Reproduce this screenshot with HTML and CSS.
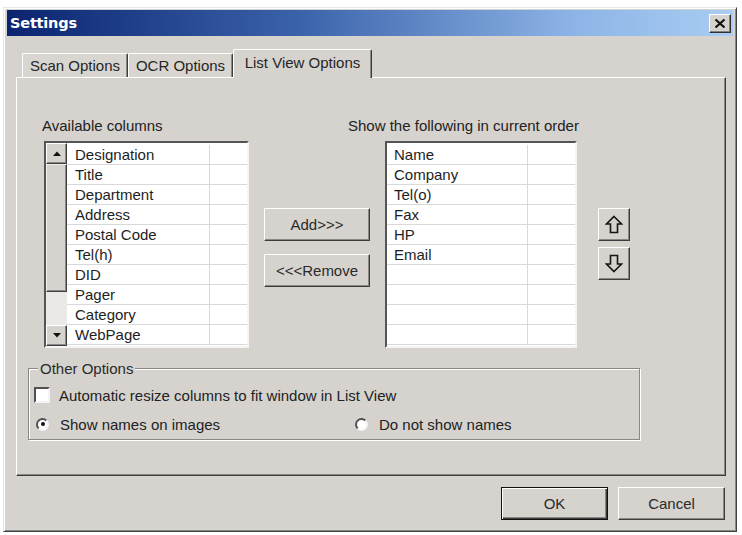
FILE: index.html
```html
<!DOCTYPE html>
<html>
<head>
<meta charset="utf-8">
<title>Settings</title>
<link rel="stylesheet" href="styles.css">
</head>
<body>
<div class="window">
  <div class="titlebar">
    <span class="title">Settings</span>
    <span class="close">
      <svg width="12" height="11" viewBox="0 0 12 11"><path d="M1.5 1.5 L10.5 9.5 M10.5 1.5 L1.5 9.5" stroke="#111" stroke-width="2.2" fill="none"/></svg>
    </span>
  </div>
  <div class="body">
    <div class="tabs">
      <div class="tab tab-scan">Scan Options</div>
      <div class="tab tab-ocr">OCR Options</div>
      <div class="tab tab-list active">List View Options</div>
    </div>
    <div class="panel">
      <div class="columns">
        <div class="label label-avail">Available columns</div>
        <div class="label label-show">Show the following in current order</div>
        <div class="list list-avail">
          <div class="scrollbar">
            <div class="sb-btn"><svg width="8" height="5" viewBox="0 0 8 5"><polygon points="0,5 4,0.5 8,5" fill="#111"/></svg></div>
            <div class="sb-thumb"></div>
            <div class="sb-track"></div>
            <div class="sb-btn"><svg width="8" height="5" viewBox="0 0 8 5"><polygon points="0,0 8,0 4,4.5" fill="#111"/></svg></div>
          </div>
          <div class="rows">
            <div class="row"><span class="c1">Designation</span><span class="c2"></span></div>
            <div class="row"><span class="c1">Title</span><span class="c2"></span></div>
            <div class="row"><span class="c1">Department</span><span class="c2"></span></div>
            <div class="row"><span class="c1">Address</span><span class="c2"></span></div>
            <div class="row"><span class="c1">Postal Code</span><span class="c2"></span></div>
            <div class="row"><span class="c1">Tel(h)</span><span class="c2"></span></div>
            <div class="row"><span class="c1">DID</span><span class="c2"></span></div>
            <div class="row"><span class="c1">Pager</span><span class="c2"></span></div>
            <div class="row"><span class="c1">Category</span><span class="c2"></span></div>
            <div class="row"><span class="c1">WebPage</span><span class="c2"></span></div>
          </div>
        </div>
        <div class="move-btns">
          <div class="btn btn-move">Add&gt;&gt;&gt;</div>
          <div class="btn btn-move">&lt;&lt;&lt;Remove</div>
        </div>
        <div class="list list-show">
          <div class="rows">
            <div class="row"><span class="c1">Name</span><span class="c2"></span></div>
            <div class="row"><span class="c1">Company</span><span class="c2"></span></div>
            <div class="row"><span class="c1">Tel(o)</span><span class="c2"></span></div>
            <div class="row"><span class="c1">Fax</span><span class="c2"></span></div>
            <div class="row"><span class="c1">HP</span><span class="c2"></span></div>
            <div class="row"><span class="c1">Email</span><span class="c2"></span></div>
            <div class="row"><span class="c1"></span><span class="c2"></span></div>
            <div class="row"><span class="c1"></span><span class="c2"></span></div>
            <div class="row"><span class="c1"></span><span class="c2"></span></div>
            <div class="row"><span class="c1"></span><span class="c2"></span></div>
          </div>
        </div>
        <div class="order-btns">
          <div class="btn btn-arrow">
            <svg width="18" height="19" viewBox="0 0 18 19"><path d="M9 1.5 L16.5 9 H12.5 V17.5 H5.5 V9 H1.5 Z" stroke="#151515" stroke-width="1.6" fill="none" stroke-linejoin="miter"/></svg>
          </div>
          <div class="btn btn-arrow">
            <svg width="18" height="19" viewBox="0 0 18 19"><path d="M9 17.5 L16.5 10 H12.5 V1.5 H5.5 V10 H1.5 Z" stroke="#151515" stroke-width="1.6" fill="none" stroke-linejoin="miter"/></svg>
          </div>
        </div>
      </div>
      <div class="group">
        <div class="group-title">Other Options</div>
        <div class="check-row">
          <span class="checkbox"></span>
          <span class="opt-text">Automatic resize columns to fit window in List View</span>
        </div>
        <div class="radio-row">
          <div class="radio-opt opt-first"><span class="radio checked"></span><span class="opt-text">Show names on images</span></div>
          <div class="radio-opt"><span class="radio"></span><span class="opt-text">Do not show names</span></div>
        </div>
      </div>
    </div>
    <div class="footer">
      <div class="btn btn-dlg default">OK</div>
      <div class="btn btn-dlg">Cancel</div>
    </div>
  </div>
</div>
</body>
</html>
```

FILE: styles.css
```css
* { box-sizing: border-box; }

html, body {
  margin: 0;
  padding: 0;
  background: #ffffff;
}

body {
  font-family: "Liberation Sans", Arial, sans-serif;
  font-size: 15px;
  color: #1e1e1e;
}

.window {
  margin: 7px 0 0 3px;
  width: 734px;
  height: 525px;
  background: #d6d3ce;
  border: 1px solid;
  border-color: #e9e7e3 #404040 #404040 #e9e7e3;
  box-shadow: inset 1px 1px 0 #ffffff, inset -1px -1px 0 #8a8884;
  padding: 2px 3px 3px 3px;
  display: flex;
  flex-direction: column;
}

.titlebar {
  height: 26px;
  flex: none;
  display: flex;
  align-items: center;
  justify-content: space-between;
  padding: 0 2px 0 3px;
  background: linear-gradient(to right, #0b2470 0%, #3a62aa 40%, #8cb4e6 78%, #a9cdf2 100%);
}

.title {
  font-family: "DejaVu Sans", Verdana, sans-serif;
  font-weight: bold;
  font-size: 14.5px;
  color: #ffffff;
  letter-spacing: -0.2px;
}

.close {
  width: 22px;
  height: 19px;
  background: #d6d3ce;
  border: 1px solid;
  border-color: #ffffff #303030 #303030 #ffffff;
  box-shadow: inset -1px -1px 0 #808080;
  display: flex;
  align-items: center;
  justify-content: center;
}

.body {
  flex: 1;
  display: flex;
  flex-direction: column;
  padding: 13px 7px 0 9px;
}

.tabs {
  height: 29px;
  flex: none;
  display: flex;
  align-items: flex-start;
  padding-left: 6px;
  margin-bottom: -1px;
}

.tab {
  height: 24px;
  margin-top: 4px;
  display: flex;
  align-items: center;
  justify-content: center;
  background: #d9d6d1;
  border-top: 1px solid #ffffff;
  border-left: 1px solid #ffffff;
  border-right: 1px solid #3c3c3c;
  border-radius: 2px 2px 0 0;
  box-shadow: inset -1px 0 0 #8a8884;
  color: #262626;
  white-space: nowrap;
  padding-bottom: 1px;
}

.tab-scan { width: 106px; }
.tab-ocr { width: 105px; }
.tab-list { width: 139px; }

.tab.active {
  height: 29px;
  margin-top: 0;
  background: #d6d3ce;
  position: relative;
  z-index: 1;
  padding-bottom: 4px;
}

.panel {
  height: 399px;
  flex: none;
  border: 1px solid;
  border-color: #ffffff #3c3c3c #3c3c3c #ffffff;
  box-shadow: inset -1px -1px 0 #8a8884;
  padding-top: 39px;
}

.columns {
  margin-left: 27px;
  display: grid;
  grid-template-columns: 205px 106px 192px 32px;
  grid-template-rows: 17px 207px;
  column-gap: 15px;
  row-gap: 7px;
}

.label {
  line-height: 17px;
  white-space: nowrap;
  color: #222;
}

.label-avail {
  grid-column: 1;
  margin-left: -2px;
}

.label-show {
  grid-column: 2 / 5;
  margin-left: 84px;
}

.list {
  background: #ffffff;
  border: 2px solid;
  border-color: #555555 #f4f4f4 #f4f4f4 #555555;
  display: flex;
  overflow: hidden;
}

.scrollbar {
  width: 21px;
  flex: none;
  display: flex;
  flex-direction: column;
}

.sb-btn {
  height: 21px;
  flex: none;
  background: #d6d3ce;
  border: 1px solid;
  border-color: #ffffff #404040 #404040 #ffffff;
  box-shadow: inset -1px -1px 0 #8a8884;
  display: flex;
  align-items: center;
  justify-content: center;
}

.sb-thumb {
  height: 128px;
  flex: none;
  background: #d6d3ce;
  border: 1px solid;
  border-color: #f2f1ee #404040 #404040 #f2f1ee;
  box-shadow: inset -1px -1px 0 #8a8884;
}

.sb-track {
  flex: 1;
  background: #ebe9e5;
}

.rows {
  flex: 1;
  padding-top: 2px;
}

.row {
  height: 20px;
  display: grid;
  border-bottom: 1px solid #d9d9d9;
}

.list-avail .row { grid-template-columns: 142px 1fr; }
.list-show .row { grid-template-columns: 140px 1fr; }

.c1 {
  line-height: 19px;
  white-space: nowrap;
  overflow: hidden;
  color: #1e1e1e;
}

.list-avail .c1 { padding-left: 8px; }
.list-show .c1 { padding-left: 7px; }

.c2 {
  border-left: 1px solid #d9d9d9;
}

.btn {
  background: #d6d3ce;
  border: 1px solid;
  border-color: #ffffff #3c3c3c #3c3c3c #ffffff;
  box-shadow: inset -1px -1px 0 #8a8884;
  display: flex;
  align-items: center;
  justify-content: center;
  color: #2a2a2a;
  white-space: nowrap;
}

.move-btns {
  display: flex;
  flex-direction: column;
  gap: 13px;
  padding-top: 67px;
}

.btn-move {
  height: 33px;
}

.order-btns {
  margin-left: 6px;
  display: flex;
  flex-direction: column;
  gap: 6px;
  padding-top: 67px;
}

.btn-arrow {
  width: 32px;
  height: 33px;
}

.group {
  margin: 20px 0 0 11px;
  width: 612px;
  height: 72px;
  border: 1px solid #8a8884;
  box-shadow: 1px 1px 0 #ffffff, inset 1px 1px 0 #ffffff;
  display: flex;
  flex-direction: column;
  padding: 0 0 0 5px;
}

.group-title {
  align-self: flex-start;
  margin: -9px 0 0 4px;
  padding: 0 2px;
  line-height: 17px;
  height: 17px;
  background: #d6d3ce;
  color: #2a2a2a;
}

.check-row {
  margin-top: 8px;
  height: 20px;
  display: flex;
  align-items: center;
}

.checkbox {
  width: 16px;
  height: 16px;
  flex: none;
  background: #ffffff;
  border: 2px solid;
  border-color: #505050 #f4f4f4 #f4f4f4 #505050;
  margin-right: 9px;
}

.opt-text {
  white-space: nowrap;
  color: #222;
}

.radio-row {
  margin-top: 9px;
  height: 20px;
  display: flex;
  align-items: center;
}

.radio-opt {
  display: flex;
  align-items: center;
}

.opt-first {
  width: 319px;
}

.radio {
  width: 13px;
  height: 13px;
  flex: none;
  border-radius: 50%;
  background: #ffffff;
  border: 2px solid;
  border-color: #505050 #f4f4f4 #f4f4f4 #505050;
  margin-left: 2px;
  margin-right: 11px;
  display: flex;
  align-items: center;
  justify-content: center;
}

.radio.checked::after {
  content: "";
  width: 4px;
  height: 4px;
  border-radius: 50%;
  background: #111;
}

.footer {
  margin-top: 11px;
  display: flex;
  justify-content: flex-end;
  gap: 10px;
  padding-right: 1px;
}

.btn-dlg {
  width: 107px;
  height: 33px;
}

.btn-dlg.default {
  border: 1px solid #111111;
  box-shadow: inset 1px 1px 0 #ffffff, inset -1px -1px 0 #3c3c3c, inset -2px -2px 0 #8a8884;
}
```
